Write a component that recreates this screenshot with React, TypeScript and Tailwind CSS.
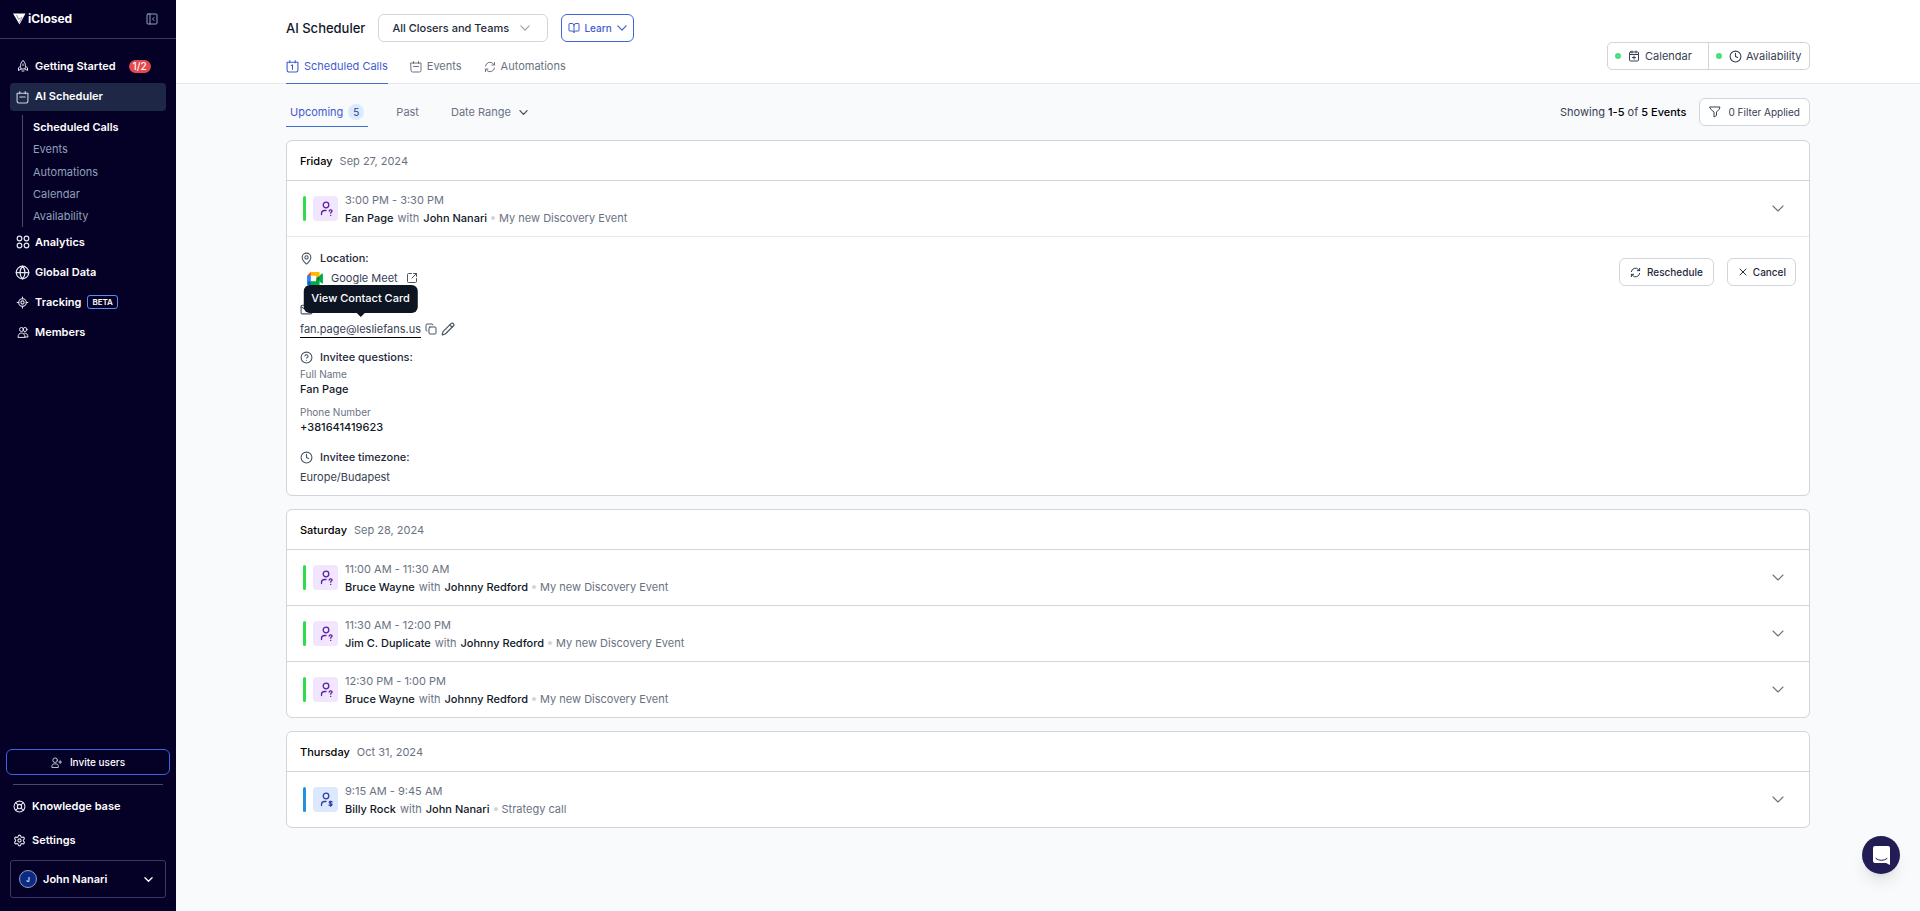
import { useState } from "react";
import type { ReactNode } from "react";
import {
  BookOpen,
  CircleQuestionMark,
  Clock,
  Copy,
  Globe,
  LifeBuoy,
  LocateFixed,
  Mail,
  MapPin,
  Pencil,
  Settings,
  SquareArrowOutUpRight,
  X,
} from "lucide-react";

type Call = {
  time: string;
  invitee: string;
  host: string;
  event: string;
  kind: "discovery" | "strategy";
};

type Day = {
  day: string;
  date: string;
  calls: Call[];
};

const days: Day[] = [
  {
    day: "Friday",
    date: "Sep 27, 2024",
    calls: [
      {
        time: "3:00 PM - 3:30 PM",
        invitee: "Fan Page",
        host: "John Nanari",
        event: "My new Discovery Event",
        kind: "discovery",
      },
    ],
  },
  {
    day: "Saturday",
    date: "Sep 28, 2024",
    calls: [
      {
        time: "11:00 AM - 11:30 AM",
        invitee: "Bruce Wayne",
        host: "Johnny Redford",
        event: "My new Discovery Event",
        kind: "discovery",
      },
      {
        time: "11:30 AM - 12:00 PM",
        invitee: "Jim C. Duplicate",
        host: "Johnny Redford",
        event: "My new Discovery Event",
        kind: "discovery",
      },
      {
        time: "12:30 PM - 1:00 PM",
        invitee: "Bruce Wayne",
        host: "Johnny Redford",
        event: "My new Discovery Event",
        kind: "discovery",
      },
    ],
  },
  {
    day: "Thursday",
    date: "Oct 31, 2024",
    calls: [
      {
        time: "9:15 AM - 9:45 AM",
        invitee: "Billy Rock",
        host: "John Nanari",
        event: "Strategy call",
        kind: "strategy",
      },
    ],
  },
];

const subLinks = ["Scheduled Calls", "Events", "Automations", "Calendar", "Availability"];

function Icon({ className, children }: { className?: string; children: ReactNode }) {
  return (
    <svg
      viewBox="0 0 24 24"
      fill="none"
      stroke="currentColor"
      strokeWidth="2"
      strokeLinecap="round"
      strokeLinejoin="round"
      className={className}
      aria-hidden="true"
    >
      {children}
    </svg>
  );
}

function Chevron({ className }: { className?: string }) {
  return (
    <svg
      viewBox="0 0 12 7"
      fill="none"
      stroke="currentColor"
      strokeWidth="1.1"
      strokeLinecap="round"
      strokeLinejoin="round"
      className={className}
      aria-hidden="true"
    >
      <path d="M1 1l5 5 5-5" />
    </svg>
  );
}

function EventsIcon({ className }: { className?: string }) {
  return (
    <Icon className={className}>
      <path d="M2 4h20v15a3 3 0 0 1-3 3H5a3 3 0 0 1-3-3z" />
      <path d="M7 1v4M17 1v4M7 11h10" />
    </Icon>
  );
}

function SyncIcon({ className }: { className?: string }) {
  return (
    <Icon className={className}>
      <path d="M3 10a9 9 0 0 1 15.5-4.500L21 8" />
      <path d="M21 3v5h-5" />
      <path d="M21 14a9 9 0 0 1-15.500 4.500L3 16" />
      <path d="M3 21v-5h5" />
    </Icon>
  );
}

function Logo() {
  return (
    <a href="#" className="flex items-center gap-[2px] text-white">
      <svg viewBox="0 0 26 24" className="h-3 w-[13px]" aria-hidden="true">
        <path d="M0 1h25L13 23z" fill="#fff" />
        <path d="M7 4l4 8M13 19l5-11" stroke="#050026" strokeWidth="0.9" />
        <path d="M10 13l5-3" stroke="#050026" strokeWidth="0.8" />
      </svg>
      <span className="text-xs leading-4 font-bold">iClosed</span>
    </a>
  );
}

function MeetLogo() {
  return (
    <svg viewBox="0 0 87.5 72" className="h-[13px] w-4" aria-hidden="true">
      <path fill="#00832d" d="M49.5 36l8.530 9.750 11.470 7.330 2-17.020-2-16.640-11.690 6.440z" />
      <path fill="#0066da" d="M0 51.500V66c0 3.315 2.685 6 6 6h14.500l3-10.960-3-9.540-9.950-3z" />
      <path fill="#e94235" d="M20.500 0L0 20.500l10.550 3 9.950-3 2.950-9.410z" />
      <path fill="#2684fc" d="M20.500 20.500H0v31h20.500z" />
      <path
        fill="#00ac47"
        d="M82.600 8.680L69.500 19.420v33.660l13.160 10.790c1.970 1.540 4.850.135 4.850-2.370V11c0-2.535-2.945-3.925-4.910-2.320zM49.500 36v15.500h-29V72h43c3.315 0 6-2.685 6-6V53.080z"
      />
      <path fill="#ffba00" d="M63.500 0h-43v20.500h29V36l20-16.570V6c0-3.315-2.685-6-6-6z" />
    </svg>
  );
}

function NavLink({ icon, label, children }: { icon: ReactNode; label: string; children?: ReactNode }) {
  return (
    <a href="#" className="flex h-[30px] items-center gap-[5px] px-[5px] font-semibold text-white">
      <span className="flex w-[15px] shrink-0 justify-center text-slate-200">{icon}</span>
      {label}
      {children}
    </a>
  );
}

function Sidebar() {
  return (
    <aside className="sticky top-0 flex h-screen w-44 shrink-0 flex-col bg-[#050026] text-[11px]">
      <div className="flex h-[39px] items-center justify-between border-b border-[#3b3a5c] pr-[18px] pl-[13px]">
        <Logo />
        <button type="button" aria-label="Collapse sidebar" className="text-slate-400">
          <Icon className="size-3">
            <rect x="2" y="2" width="20" height="20" rx="2" />
            <path d="M8 2v20M16 9l-3 3 3 3" />
          </Icon>
        </button>
      </div>

      <nav className="flex flex-col px-[10px] pt-3">
        <NavLink
          label="Getting Started"
          icon={
            <Icon className="size-3">
              <path d="M12 1c-5 4-6 10-4 17h8c2-7 1-13-4-17z" />
              <path d="M7 12l-4 4v5l5-3M17 12l4 4v5l-5-3M12 8v3M10 22h4" />
            </Icon>
          }
        >
          <span className="ml-2 rounded-full bg-[#e5484d] px-1 text-[10px] leading-[13px] font-medium">
            1/2
          </span>
        </NavLink>
        <a
          href="#"
          className="mt-[2px] flex h-7 items-center gap-[6px] rounded bg-[#1e2746] px-[6px] pb-[2px] font-semibold text-white"
        >
          <EventsIcon className="mt-[2px] size-[13px] text-slate-300" />
          AI Scheduler
        </a>
        <ul className="mt-1 ml-3 flex h-28 flex-col justify-between border-l border-[#4a4968] pt-px pl-[10px]">
          {subLinks.map((label, i) => (
            <li key={label}>
              <a
                href="#"
                className={
                  i === 0
                    ? "block leading-[22px] font-semibold text-white"
                    : "block leading-[22px] text-slate-400"
                }
              >
                {label}
              </a>
            </li>
          ))}
        </ul>
        <div className="flex flex-col">
          <NavLink
            label="Analytics"
            icon={
              <Icon className="size-[14px]">
                <circle cx="6" cy="6" r="4" />
                <circle cx="18" cy="6" r="4" />
                <circle cx="6" cy="18" r="4" />
                <circle cx="18" cy="18" r="4" />
              </Icon>
            }
          />
          <NavLink label="Global Data" icon={<Globe className="size-[15px]" />} />
          <NavLink label="Tracking" icon={<LocateFixed className="size-[13px]" />}>
            <span className="ml-px rounded-[3px] border border-[#5b8def] px-1 text-[8px] leading-3 font-semibold">
              BETA
            </span>
          </NavLink>
          <NavLink
            label="Members"
            icon={
              <Icon className="size-3">
                <circle cx="9" cy="7" r="4" />
                <circle cx="16" cy="7" r="4" />
                <path d="M2 22c0-5 3-8 7-8s7 3 7 8z" />
                <path d="M15 14c4 0 7 3 7 8h-6" />
              </Icon>
            }
          />
        </div>
      </nav>

      <div className="mt-auto flex flex-col">
        <button
          type="button"
          className="mx-[6px] flex h-[26px] items-center justify-center gap-2 rounded-md border border-[#3f63d8] text-[10px] font-medium text-white"
        >
          <Icon className="size-[11px] text-slate-300">
            <circle cx="9" cy="7" r="5" />
            <path d="M2 22v-2c0-3 2-5 5-5h4c3 0 5 2 5 5v2zM20 8v6M17 11h6" />
          </Icon>
          Invite users
        </button>
        <hr className="mx-[13px] mt-[9px] border-[#4a4968]" />
        <a href="#" className="mt-1 flex h-[34px] items-center gap-[6px] px-[13px] font-semibold text-white">
          <LifeBuoy className="size-[13px] text-slate-200" />
          Knowledge base
        </a>
        <a href="#" className="flex h-[34px] items-center gap-[6px] px-[13px] font-semibold text-white">
          <Settings className="size-[13px] text-slate-200" />
          Settings
        </a>
        <button
          type="button"
          className="mx-[10px] mt-[3px] mb-[13px] flex h-[38px] items-center gap-[6px] rounded-[3px] border border-[#3b3a5c] pr-3 pl-2 font-semibold text-white"
        >
          <span className="flex size-[18px] items-center justify-center rounded-full border border-slate-400 bg-[#0b2a86] text-[6px]">
            J
          </span>
          John Nanari
          <Chevron className="ml-auto h-[5px] w-[9px] stroke-[1.8]" />
        </button>
      </div>
    </aside>
  );
}

function Header() {
  return (
    <header className="flex h-[84px] items-stretch justify-between border-b border-gray-200 bg-white px-[110px]">
      <div className="flex flex-col">
        <div className="mt-[14px] flex items-center gap-[13px]">
          <h1 className="text-[13px] leading-5 font-medium text-gray-900">AI Scheduler</h1>
          <div className="relative">
            <select
              aria-label="Closers and teams"
              className="h-7 w-[170px] appearance-none rounded-md border border-gray-300 bg-white pl-[13px] text-[11px] font-medium text-gray-800"
            >
              <option>All Closers and Teams</option>
            </select>
            <Chevron className="pointer-events-none absolute top-[11px] right-[18px] h-[6px] w-[10px] stroke-[1.4] text-gray-400" />
          </div>
          <button
            type="button"
            className="flex h-7 items-center gap-1 rounded-md border border-[#3f63d8] px-[6px] text-[10px] font-medium text-[#3f5bcf]"
          >
            <BookOpen className="size-3" />
            Learn
            <Chevron className="ml-px h-[6px] w-[10px] stroke-[1.4]" />
          </button>
        </div>
        <nav className="mt-[7px] -mb-px flex flex-1 gap-[22px] text-[11px] text-gray-500">
          <a href="#" className="flex items-center gap-[5px] border-b border-[#3f6fd0] text-[#3f5bcf]">
            <Icon className="size-[13px]">
              <path d="M2 4h20v15a3 3 0 0 1-3 3H5a3 3 0 0 1-3-3z" />
              <path d="M7 1v4M17 1v4M10 10l2-1v8" />
            </Icon>
            Scheduled Calls
          </a>
          <a href="#" className="flex items-center gap-[5px]">
            <EventsIcon className="size-3" />
            Events
          </a>
          <a href="#" className="flex items-center gap-[5px]">
            <SyncIcon className="size-3" />
            Automations
          </a>
        </nav>
      </div>
      <div className="mt-[42px] flex h-7 rounded-[5px] border border-gray-300 text-[11px] text-gray-700">
        <button type="button" className="flex w-[100px] items-center pl-[7px]">
          <span className="mr-[7px] size-[6px] rounded-full bg-[#4ade80]" />
          <Icon className="mr-[5px] size-3">
            <rect x="3" y="4" width="18" height="18" rx="2" />
            <path d="M8 2v4M16 2v4M3 9h18M12 12v6M9 15h6" />
          </Icon>
          Calendar
        </button>
        <button type="button" className="flex w-[101px] items-center border-l border-gray-300 pl-[7px]">
          <span className="mr-[7px] size-[6px] rounded-full bg-[#4ade80]" />
          <Clock className="mr-1 size-[13px]" />
          Availability
        </button>
      </div>
    </header>
  );
}

function Filters() {
  return (
    <div className="flex items-start justify-between pt-[14px] text-[11px] text-gray-500">
      <div className="flex">
        <button
          type="button"
          className="flex h-[29px] items-center gap-[5px] border-b border-[#3f6fd0] px-1 text-[#3f5bcf]"
        >
          Upcoming
          <span className="size-4 rounded-full bg-[#dbeafe] text-[10px] leading-4 text-[#26418f]">5</span>
        </button>
        <button type="button" className="ml-7 h-7">
          Past
        </button>
        <button type="button" className="ml-8 flex h-7 items-center gap-2">
          Date Range
          <Chevron className="h-[5px] w-[9px] stroke-[1.6] text-gray-700" />
        </button>
      </div>
      <div className="flex items-center gap-[13px] text-gray-700">
        <p>
          Showing <span className="font-medium text-black">1-5</span> of{" "}
          <span className="font-medium text-black">5 Events</span>
        </p>
        <button
          type="button"
          className="flex h-7 items-center gap-[7px] rounded-md border border-gray-300 bg-white px-[9px] text-[10px]"
        >
          <Icon className="size-3">
            <path d="M2 2h20l-2 5-5 5v7l-5 3V12L4 7z" />
          </Icon>
          0 Filter Applied
        </button>
      </div>
    </div>
  );
}

function KindIcon({ kind }: { kind: Call["kind"] }) {
  const strategy = kind === "strategy";
  return (
    <>
      <span
        className={
          strategy
            ? "h-[25px] w-[3px] rounded-full bg-[#2490e0]"
            : "h-[25px] w-[3px] rounded-full bg-[#2fdc4c]"
        }
      />
      <span
        className={
          strategy
            ? "ml-[7px] flex size-[25px] items-center justify-center rounded bg-[#dbe8fd] text-[#3040a0]"
            : "ml-[7px] flex size-[25px] items-center justify-center rounded bg-[#f1e6fd] text-[#5b21a6]"
        }
      >
        <svg
          viewBox="0 0 14 16"
          fill="none"
          stroke="currentColor"
          strokeWidth="1.300"
          strokeLinecap="round"
          className="ml-[3px] h-4 w-[14px]"
          aria-hidden="true"
        >
          <circle cx="6" cy="4" r="2.800" />
          <path d="M1.500 13.500v-1c0-2 1.200-3 3-3h1.500" />
          {strategy ? (
            <path
              d="M12 9.800c-1.200-.8-2.800-.4-2.800.6 0 1.300 2.900.7 2.900 2.100 0 1.100-1.900 1.500-3.100.5M10.700 9v5.300"
              strokeWidth="1.200"
            />
          ) : (
            <path d="M9.200 10c.2-1.500 3-1.300 2.800.2-.1.900-1.300 1-1.300 2M10.700 14.300v.1" />
          )}
        </svg>
      </span>
    </>
  );
}

function CallRow({ call, open, onToggle }: { call: Call; open: boolean; onToggle: () => void }) {
  return (
    <div className="flex h-[55px] items-center pr-[25px] pl-4 text-[11px] text-gray-500">
      <KindIcon kind={call.kind} />
      <div className="ml-[7px] flex-1 leading-[18px]">
        <p>{call.time}</p>
        <p className="flex items-center gap-1">
          <span className="font-medium text-gray-900">{call.invitee}</span>
          with
          <span className="font-medium text-gray-900">{call.host}</span>
          <span className="size-1 rounded-full bg-gray-300" />
          {call.event}
        </p>
      </div>
      <button type="button" aria-label="Toggle details" aria-expanded={open} onClick={onToggle}>
        <Chevron className="h-[7px] w-3" />
      </button>
    </div>
  );
}

function DetailTitle({ icon, children }: { icon: ReactNode; children?: ReactNode }) {
  return (
    <h3 className="flex h-5 items-center gap-[7px] font-medium text-gray-800">
      <span className="text-gray-600">{icon}</span>
      {children}
    </h3>
  );
}

function CallDetails() {
  return (
    <div className="flex items-start justify-between border-t border-gray-200 px-[13px] pt-[11px] pb-2 text-[11px] text-gray-700">
      <div>
        <DetailTitle icon={<MapPin className="size-[13px]" />}>Location:</DetailTitle>
        <div className="flex h-5 items-center gap-2 pl-[7px]">
          <MeetLogo />
          Google Meet
          <a href="#" aria-label="Open meeting" className="text-gray-600">
            <SquareArrowOutUpRight className="size-3" />
          </a>
        </div>
        <div className="mt-[11px]">
          <DetailTitle icon={<Mail aria-label="Email" className="size-[13px]" />} />
        </div>
        <div className="flex h-5 items-center gap-1">
          <div className="relative">
            <a href="#" className="block border-b border-black leading-4">
              fan.page@lesliefans.us
            </a>
            <div className="absolute bottom-full left-1/2 mb-2 flex h-7 -translate-x-1/2 items-center rounded-md bg-[#0d1523] px-2 font-medium whitespace-nowrap text-white">
              View Contact Card
              <span className="absolute top-full left-1/2 h-0 w-0 -translate-x-1/2 border-x-4 border-t-4 border-x-transparent border-t-[#0d1523]" />
            </div>
          </div>
          <button type="button" aria-label="Copy email" className="text-gray-600">
            <Copy className="size-3" />
          </button>
          <button type="button" aria-label="Edit email" className="text-gray-600">
            <Pencil className="size-[14px]" />
          </button>
        </div>

        <div className="mt-2">
          <DetailTitle icon={<CircleQuestionMark className="size-[13px]" />}>Invitee questions:</DetailTitle>
        </div>
        <dl className="flex flex-col gap-[7px]">
          <div>
            <dt className="text-[10px] leading-[14px] text-gray-500">Full Name</dt>
            <dd className="leading-[17px] font-medium text-gray-900">Fan Page</dd>
          </div>
          <div>
            <dt className="text-[10px] leading-[14px] text-gray-500">Phone Number</dt>
            <dd className="leading-[17px] font-medium text-gray-900">+381641419623</dd>
          </div>
        </dl>

        <div className="mt-[11px]">
          <DetailTitle icon={<Clock className="size-[13px]" />}>Invitee timezone:</DetailTitle>
        </div>
        <p className="leading-5">Europe/Budapest</p>
      </div>
      <div className="mt-[10px] flex gap-[13px] text-[10px] font-medium text-gray-800">
        <button type="button" className="flex h-7 items-center gap-[6px] rounded-md border border-gray-300 px-[10px]">
          <SyncIcon className="size-[11px]" />
          Reschedule
        </button>
        <button type="button" className="flex h-7 items-center gap-1 rounded-md border border-gray-300 px-[9px]">
          <X className="size-3" />
          Cancel
        </button>
      </div>
    </div>
  );
}

function DayCard({ day }: { day: Day }) {
  const [openIndex, setOpenIndex] = useState(day.day === "Friday" ? 0 : -1);

  return (
    <section className="rounded-md border border-gray-300 bg-white">
      <h2 className="flex h-10 items-center gap-[7px] border-b border-gray-300 px-[13px] pt-px text-[11px] text-gray-500">
        <span className="font-medium text-black">{day.day}</span>
        <span className="font-normal">{day.date}</span>
      </h2>
      <div className="divide-y divide-gray-300">
        {day.calls.map((call, i) => (
          <div key={call.time}>
            <CallRow
              call={call}
              open={openIndex === i}
              onToggle={() => setOpenIndex(openIndex === i ? -1 : i)}
            />
            {openIndex === i && <CallDetails />}
          </div>
        ))}
      </div>
    </section>
  );
}

export default function App() {
  return (
    <div className="flex min-h-screen bg-[#f9fafc] font-['Inter',sans-serif]">
      <Sidebar />
      <div className="min-w-0 flex-1">
        <Header />
        <main className="px-[110px] pb-10">
          <Filters />
          <div className="mt-[13px] flex flex-col gap-[13px]">
            {days.map((day) => (
              <DayCard key={day.day} day={day} />
            ))}
          </div>
        </main>
      </div>
      <button
        type="button"
        aria-label="Open chat"
        className="fixed right-5 bottom-[37px] flex size-[38px] items-center justify-center rounded-full bg-[#221e55] shadow-lg"
      >
        <svg viewBox="0 0 17 19" className="h-[19px] w-[17px]" aria-hidden="true">
          <path d="M2 0h13a2 2 0 0 1 2 2v17l-4-2H2a2 2 0 0 1-2-2V2a2 2 0 0 1 2-2z" fill="#fff" />
          <path d="M3 12.500c3 2.400 8 2.400 11 0" stroke="#221e55" fill="none" strokeLinecap="round" />
        </svg>
      </button>
    </div>
  );
}
